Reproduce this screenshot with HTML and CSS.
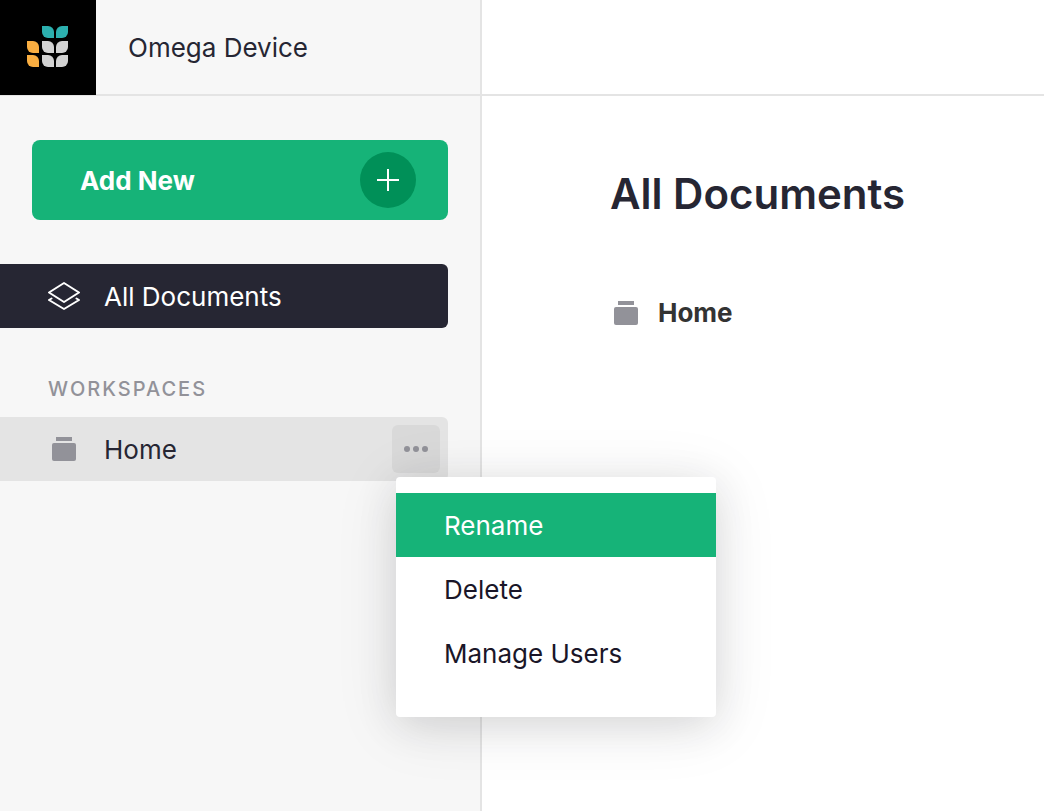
FILE: index.html
```html
<!DOCTYPE html>
<html lang="en">
<head>
<meta charset="utf-8">
<meta name="viewport" content="width=device-width, initial-scale=1">
<title>All Documents - Omega Device</title>
<link rel="stylesheet" href="styles.css">
</head>
<body>
<svg class="defs" aria-hidden="true">
  <symbol id="box" viewBox="0 0 24 24">
    <path d="M4 0h16v4H4z"/>
    <rect y="6" width="24" height="18" rx="2"/>
  </symbol>
</svg>
<div class="app">
  <aside class="sidebar">
    <header class="brand">
      <a class="logo" href="#" aria-label="Start page">
        <svg viewBox="0 0 42 42" width="42" height="42">
          <g fill="#2cb0af">
            <path d="M15 0h6a6 6 0 0 1 6 6v6h-6a6 6 0 0 1-6-6z"/>
            <path d="M41 0h-6a6 6 0 0 0-6 6v6h6a6 6 0 0 0 6-6z"/>
          </g>
          <g fill="#f9ae41">
            <path d="M0 15h6a6 6 0 0 1 6 6v6H6a6 6 0 0 1-6-6z"/>
            <path d="M0 29h6a6 6 0 0 1 6 6v6H6a6 6 0 0 1-6-6z"/>
          </g>
          <g fill="#d2d2d2">
            <path d="M15 15h6a6 6 0 0 1 6 6v6h-6a6 6 0 0 1-6-6z"/>
            <path d="M15 29h6a6 6 0 0 1 6 6v6h-6a6 6 0 0 1-6-6z"/>
            <path d="M41 15h-6a6 6 0 0 0-6 6v6h6a6 6 0 0 0 6-6z"/>
            <path d="M41 29h-6a6 6 0 0 0-6 6v6h6a6 6 0 0 0 6-6z"/>
          </g>
        </svg>
      </a>
      <span class="org">Omega Device</span>
    </header>
    <div class="panel">
      <button class="add" type="button">
        <span>Add New</span>
        <span class="plus">
          <svg viewBox="0 0 22 22" width="22" height="22"><path d="M10 0h2v10h10v2H12v10h-2V12H0v-2h10z" fill="#fff"/></svg>
        </span>
      </button>
      <nav class="nav">
        <a class="row current" href="#">
          <svg class="row-icon" viewBox="0 0 32 32" width="32" height="32" fill="none" stroke="#fff" stroke-width="2" stroke-linejoin="round" stroke-linecap="round">
            <path d="M16 3 31 12.500 16 22 1 12.500z"/>
            <path d="M3.500 18.500 1 20l15 9 15-9-2.500-1.500"/>
          </svg>
          <span>All Documents</span>
        </a>
        <h2 class="section">WORKSPACES</h2>
        <div class="workspace">
          <div class="row selected">
            <a class="row-link" href="#">
              <svg class="row-icon box" width="24" height="24"><use href="#box"/></svg>
              <span>Home</span>
            </a>
            <button class="more" type="button" aria-label="Workspace options" aria-expanded="true">
              <svg viewBox="0 0 24 6" width="24" height="6" fill="#929299"><circle cx="3" cy="3" r="3"/><circle cx="12" cy="3" r="3"/><circle cx="21" cy="3" r="3"/></svg>
            </button>
          </div>
          <div class="menu" role="menu">
            <button class="item active" type="button" role="menuitem">Rename</button>
            <button class="item" type="button" role="menuitem">Delete</button>
            <button class="item" type="button" role="menuitem">Manage Users</button>
          </div>
        </div>
      </nav>
    </div>
  </aside>
  <main class="main">
    <div class="topbar"></div>
    <div class="content">
      <h1 class="title">All Documents</h1>
      <a class="group" href="#">
        <svg class="box" width="24" height="24"><use href="#box"/></svg>
        <span>Home</span>
      </a>
    </div>
  </main>
</div>
</body>
</html>
```
FILE: styles.css
```css
* {
  box-sizing: border-box;
}

body {
  margin: 0;
  font-family: Inter, "Liberation Sans", sans-serif;
  font-size: 26px;
  line-height: 33px;
  color: #262633;
  background: #fff;
}

a {
  color: inherit;
  text-decoration: none;
}

button {
  border: 0;
  padding: 0;
  font: inherit;
  color: inherit;
  cursor: pointer;
}

svg {
  display: block;
  flex: none;
}

.defs {
  position: absolute;
  width: 0;
  height: 0;
}

.box {
  fill: #929299;
}

.app {
  display: flex;
  min-height: 100vh;
}

.sidebar {
  flex: none;
  width: 482px;
  border-right: 2px solid #e4e4e4;
  background: #f7f7f7;
}

.brand {
  display: flex;
  height: 96px;
  border-bottom: 2px solid #e4e4e4;
}

.logo {
  display: flex;
  align-items: center;
  justify-content: center;
  width: 96px;
  height: 95px;
  padding-bottom: 1px;
  background: #000;
}

.org {
  align-self: center;
  padding-left: 32px;
}

.panel {
  padding: 44px 32px 0 0;
}

.add {
  display: flex;
  align-items: center;
  justify-content: space-between;
  width: calc(100% - 32px);
  height: 80px;
  margin-left: 32px;
  padding: 0 32px 0 48px;
  border-radius: 8px;
  background: #16b378;
  color: #fff;
  font-weight: 700;
}

.plus {
  display: flex;
  align-items: center;
  justify-content: center;
  width: 56px;
  height: 56px;
  border-radius: 50%;
  background: #009058;
}

.nav {
  margin-top: 44px;
}

.row {
  display: flex;
  align-items: center;
  height: 64px;
  border-radius: 0 6px 6px 0;
}

.row-icon {
  width: 32px;
  margin: 0 24px 0 48px;
}

.current {
  background: #262633;
  color: #fff;
}

.section {
  margin: 48px 0 15px 48px;
  font-size: 20px;
  line-height: 26px;
  font-weight: 500;
  letter-spacing: 2px;
  color: #929299;
}

.workspace {
  position: relative;
}

.selected {
  padding-right: 8px;
  background: #e4e4e4;
}

.row-link {
  display: flex;
  flex: 1;
  align-items: center;
}

.more {
  display: flex;
  align-items: center;
  justify-content: center;
  width: 48px;
  height: 48px;
  border-radius: 6px;
  background: #d9d9d9;
}

.menu {
  position: absolute;
  top: 60px;
  left: calc(100% - 52px);
  z-index: 1;
  width: 320px;
  padding: 16px 0 32px;
  border-radius: 4px;
  background: #fff;
  box-shadow: 0 8px 64px rgba(38, 38, 51, 0.1), 0 8px 40px rgba(0, 0, 0, 0.1);
}

.item {
  display: block;
  width: 100%;
  height: 64px;
  padding: 0 48px;
  background: none;
  text-align: left;
  color: #1a1628;
}

.active {
  background: #16b378;
  color: #fff;
}

.main {
  flex: 1;
}

.topbar {
  height: 96px;
  border-bottom: 2px solid #e4e4e4;
}

.content {
  padding: 72px 32px 32px 128px;
}

.title {
  margin: 0;
  font-size: 42px;
  line-height: 52px;
  font-weight: 600;
}

.group {
  display: flex;
  align-items: center;
  gap: 20px;
  margin-top: 76px;
  padding-left: 4px;
  font-weight: 700;
  color: #333;
}
```
